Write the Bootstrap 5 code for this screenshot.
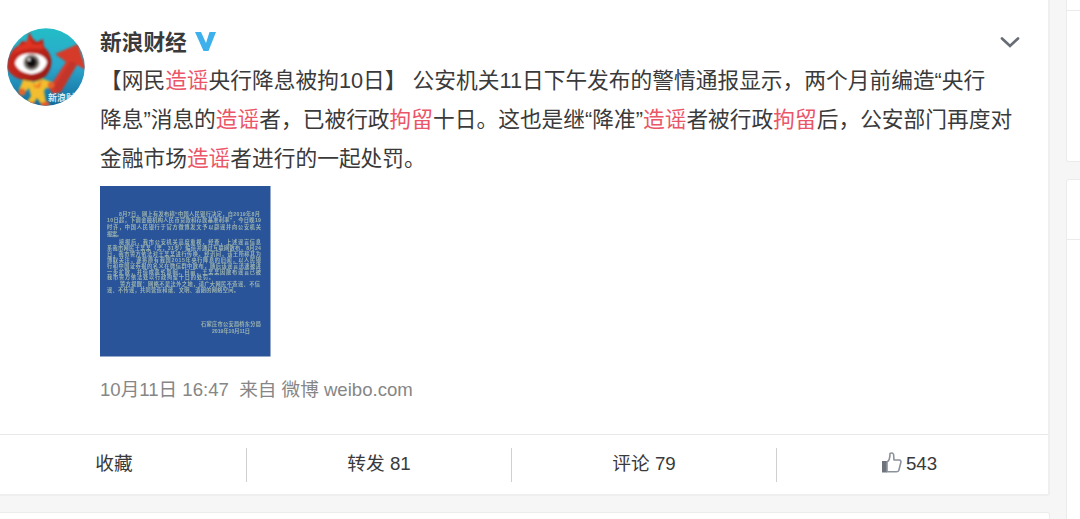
<!DOCTYPE html>
<html lang="zh-CN">
<head>
  <meta charset="utf-8">
  <meta name="viewport" content="width=device-width, initial-scale=1">
  <title>新浪财经</title>
  <link href="https://cdn.jsdelivr.net/npm/bootstrap@5.3.3/dist/css/bootstrap.min.css" rel="stylesheet">
  <style>
    body {
      background-color: #f6f6f6;
      font-family: "Liberation Sans", "Noto Sans CJK SC", sans-serif;
      height: 519px;
    }

    .feed {
      width: 1070px;
      margin-left: -20px;
    }

    .feed .card, .side .card {
      border: 1px solid #ebebeb;
      border-radius: 3px;
      color: #3a3a3a;
    }

    .feed-post {
      height: 496px;
      border-top: 0 !important;
      border-width: 2px !important;
      border-color: #efefef !important;
    }

    .post-main {
      height: 434px;
      padding: 28px 0 0 25px;
    }

    .avatar {
      width: 78px;
      height: 78px;
      margin-right: 15px;
    }

    .author {
      font-size: 21.7px;
      line-height: 29px;
      font-weight: 700;
    }

    .author svg {
      margin-top: -1px;
    }

    .author-menu {
      margin-right: 28px;
    }

    .post-text {
      font-size: 21.73px;
      line-height: 39px;
      margin-top: 4px;
      white-space: nowrap;
    }

    .post-text em {
      color: #eb5568;
      font-style: normal;
    }

    .photo {
      width: 171px;
      height: 171px;
      margin-top: 8px;
    }

    .post-from {
      color: #868686;
      font-size: 18.6px;
      line-height: 26px;
      margin-top: 20px;
      white-space: pre;
    }

    .post-actions {
      height: 60px;
      border-top: 1px solid #e8e8e8;
      font-size: 18.7px;
    }

    .post-actions > div {
      width: 265px;
      height: 34px;
      border-right: 1px solid #d0d0d0;
    }

    .post-actions > div:last-child {
      border-right: 0;
    }

    .next-post {
      margin-top: 16px;
      height: 20px;
    }

    .side {
      width: 40px;
      margin-left: 16px;
    }

    .side-top {
      height: 162px;
      border-top: 0 !important;
    }

    .side-next {
      margin-top: 17px;
    }

    .side-head {
      height: 11px;
      border-bottom: 1px solid #ebebeb;
    }

    .side-next .side-head {
      height: 60px;
    }
  </style>
</head>
<body class="overflow-hidden">

<div class="d-flex overflow-hidden h-100">

  <!-- Feed -->
  <div class="feed flex-shrink-0">
    <div class="card feed-post rounded-top-0">
      <div class="post-main d-flex align-items-start">
        <svg class="avatar flex-shrink-0" viewBox="0 0 78 78">
          <defs>
            <clipPath id="round"><circle cx="39" cy="39" r="38.7"/></clipPath>
            <linearGradient id="sky" x1="0" y1="0" x2="0" y2="1">
              <stop offset="0" stop-color="#23bdc7"/>
              <stop offset=".5" stop-color="#2ba6cb"/>
              <stop offset="1" stop-color="#12699c"/>
            </linearGradient>
            <linearGradient id="head" x1="0" y1="0" x2="1" y2="1">
              <stop offset="0" stop-color="#d22a20"/>
              <stop offset=".55" stop-color="#bd251b"/>
              <stop offset="1" stop-color="#8d1713"/>
            </linearGradient>
            <radialGradient id="iris">
              <stop offset="0" stop-color="#050505"/>
              <stop offset=".5" stop-color="#1c1917"/>
              <stop offset=".75" stop-color="#77716c"/>
              <stop offset="1" stop-color="#a9a6a2"/>
            </radialGradient>
            <filter id="soft"><feGaussianBlur stdDeviation=".8"/></filter>
          </defs>
          <g clip-path="url(#round)">
            <rect width="78" height="78" fill="url(#sky)"/>
            <g filter="url(#soft)">
              <path d="M42 60L59 34L48 26L71 16L79 42L70 37L54 64L46 66Z" fill="#d63a29"/>
              <path d="M46 61L64 33L70 36L53 65Z" fill="#c23429"/>
              <path d="M0 40C0 28 5 21 12 17L15 13L20 14L22 4L26 11L30 14L36 11L37 19C44 25 46 33 43 41C40 50 31 54 23 53C12 52 3 48 0 40Z" fill="url(#head)"/>
              <path d="M4 27L12 18L18 16L22 8L25 16L30 17L35 15L36 21C28 20 15 20 4 27Z" fill="#df3421"/>
              <path d="M16 52L12 62L16 66L22 60L24 68L19 75L27 75L30 70L34 76L39 74L37 63L39 60L46 60L45 54L36 51L27 54Z" fill="#f2bd2d"/>
              <path d="M25 54L29 58L35 52L33 60L28 60Z" fill="#ef8328"/>
              <circle cx="15" cy="64" r="3.5" fill="#e4632b"/>
              <circle cx="44" cy="57" r="3.3" fill="#e4632b"/>
              <path d="M19 74H27L28 78H18ZM34 75L41 73L43 78L34 79Z" fill="#e4582a"/>
              <path d="M8 35C10 27 18 25 25 25.5C33 26 39 29 40 34C39 41 32 46 24 46C16 45 9 41 8 35Z" fill="#fff"/>
              <circle cx="24.5" cy="34.5" r="8.3" fill="url(#iris)"/>
              <circle cx="22" cy="31.5" r="1.5" fill="#ddd"/>
            </g>
            <text x="41" y="73" font-size="9" font-weight="700" fill="#d5e7ef">新浪财经</text>
          </g>
        </svg>

        <div class="flex-grow-1">
          <div class="d-flex align-items-center author">
            <span>新浪财经</span>
            <svg class="ms-2" width="21" height="20" viewBox="0 0 21 20">
              <path d="M0 0H6L11 11L14.5 0H21L13.5 19H8.5Z" fill="#3eb0eb"/>
            </svg>
            <svg class="ms-auto author-menu" width="20" height="12" viewBox="0 0 20 12">
              <path d="M2 2.5L10 10L18 2.5" fill="none" stroke="#686d75" stroke-width="2.7" stroke-linecap="round"/>
            </svg>
          </div>

          <div class="post-text">
            【网民<em>造谣</em>央行降息被拘10日】 公安机关11日下午发布的警情通报显示，两个月前编造“央行<br>
            降息”消息的<em>造谣</em>者，已被行政<em>拘留</em>十日。这也是继“降准”<em>造谣</em>者被行政<em>拘留</em>后，公安部门再度对<br>
            金融市场<em>造谣</em>者进行的一起处罚。
          </div>

          <!-- Police notice thumbnail -->
          <svg class="photo d-block" viewBox="0 0 171 171">
            <rect width="170.5" height="170.5" fill="#2a5499"/>
            <g fill="#b9cbb2" font-size="5.2" font-weight="700" opacity=".8">
              <text x="19" y="30" textLength="141">8月7日，网上有发布称“中国人民银行决定，自2019年8月</text>
              <text x="7" y="36" textLength="154">10日起，下调金融机构人民币贷款和存款基准利率”，今日晚19</text>
              <text x="7" y="42.8" textLength="154">时许，中国人民银行于官方微博发文予以辟谣并向公安机关</text>
              <text x="7" y="50" textLength="15">报案。</text>
              <text x="19" y="58" textLength="142">接报后，我市公安机关高度重视，经查，上述谣言信息</text>
              <text x="7" y="64" textLength="154">系我市网民王某某（男，31岁）编造并通过互联网散布，8月24</text>
              <text x="7" y="69.8" textLength="154">日，我市警方依法对王某某进行传唤。经讯问，该王所称其为</text>
              <text x="7" y="75.6" textLength="154">博取关注，遂将原有我国2015年央行降息的旧闻，以人民银</text>
              <text x="7" y="81.6" textLength="154">行和中国证券报的名义在微信群中散布，随后该谣言迅速被进</text>
              <text x="7" y="87.6" textLength="154">一步扩散，并造成恶劣影响。目前，王某某因散布谣言已被</text>
              <text x="7" y="93.4" textLength="107">我市警方依法处以行政拘留十日的处罚。</text>
              <text x="20" y="99.8" textLength="140">警方提醒：网络不是法外之地，请广大网民不造谣、不信</text>
              <text x="7" y="106.2" textLength="132">谣、不传谣，共同营造和谐、文明、清朗的网络空间。</text>
              <text x="101" y="140" textLength="60">石家庄市公安局桥东分局</text>
              <text x="112" y="146.5" textLength="38">2019年10月11日</text>
            </g>
          </svg>

          <div class="post-from">10月11日 16:47  来自 微博 weibo.com</div>
        </div>
      </div>

      <div class="post-actions d-flex align-items-center">
        <div class="d-flex align-items-center justify-content-center">收藏</div>
        <div class="d-flex align-items-center justify-content-center">转发 81</div>
        <div class="d-flex align-items-center justify-content-center">评论 79</div>
        <div class="d-flex align-items-center justify-content-center">
          <svg class="me-1 mb-1" width="20" height="21" viewBox="0 0 20 21">
            <path d="M0 9H5V20.5H0Z" fill="#6f747c"/>
            <path d="M5 10C8 8.5 8 5 8 1.5Q10.5 .2 11.6 2.5L12 8H17.5Q19.5 8.5 18.7 11L16.8 18.5Q16.3 19.8 14.5 19.8H5Z" fill="#fff" stroke="#8c929b" stroke-width="1.6" stroke-linejoin="round"/>
          </svg>
          <span>543</span>
        </div>
      </div>
    </div>

    <div class="card next-post"></div>
  </div>

  <!-- Right column -->
  <div class="side flex-shrink-0">
    <div class="card side-top rounded-top-0">
      <div class="side-head"></div>
    </div>
    <div class="card side-next h-100">
      <div class="side-head"></div>
    </div>
  </div>

</div>

<script src="https://cdn.jsdelivr.net/npm/bootstrap@5.3.3/dist/js/bootstrap.bundle.min.js"></script>
</body>
</html>
